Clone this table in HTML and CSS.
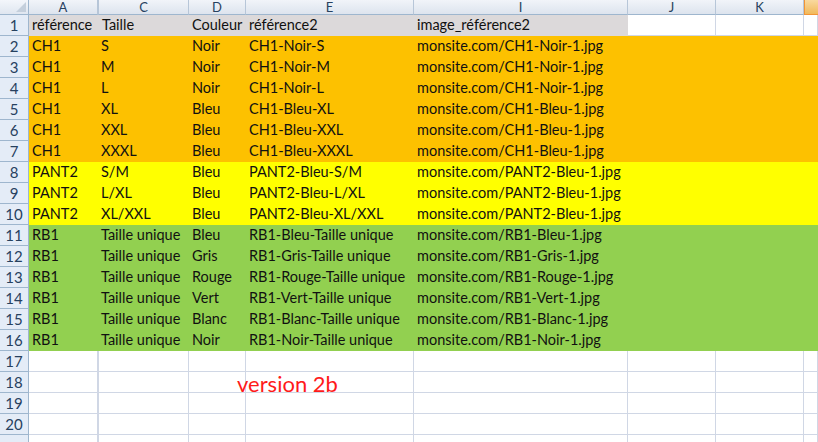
FILE: index.html
```html
<!DOCTYPE html>
<html lang="fr">
<head>
    <meta charset="UTF-8">
    <title>Classeur</title>
    <link rel="stylesheet" href="styles.css">
</head>
<body>
    <div class="sheet">
        <!-- Column headers -->
        <div class="row head">
            <div class="corner"><span class="tri"></span></div>
            <div class="col">A</div>
            <div class="col wide-left">C</div>
            <div class="col">D</div>
            <div class="col">E</div>
            <div class="col">I</div>
            <div class="col">J</div>
            <div class="col">K</div>
            <div class="col active"></div>
        </div>

        <div class="row">
            <div class="num">1</div>
            <div class="cell gray">référence</div>
            <div class="cell gray wide-left">Taille</div>
            <div class="cell gray">Couleur</div>
            <div class="cell gray">référence2</div>
            <div class="cell gray">image_référence2</div>
            <div class="cell"></div>
            <div class="cell"></div>
            <div class="cell"></div>
        </div>

        <div class="row orange">
            <div class="num">2</div>
            <div class="cell">CH1</div><div class="cell">S</div><div class="cell">Noir</div>
            <div class="cell">CH1-Noir-S</div><div class="cell">monsite.com/CH1-Noir-1.jpg</div>
            <div class="cell"></div><div class="cell"></div><div class="cell"></div>
        </div>
        <div class="row orange">
            <div class="num">3</div>
            <div class="cell">CH1</div><div class="cell">M</div><div class="cell">Noir</div>
            <div class="cell">CH1-Noir-M</div><div class="cell">monsite.com/CH1-Noir-1.jpg</div>
            <div class="cell"></div><div class="cell"></div><div class="cell"></div>
        </div>
        <div class="row orange">
            <div class="num">4</div>
            <div class="cell">CH1</div><div class="cell">L</div><div class="cell">Noir</div>
            <div class="cell">CH1-Noir-L</div><div class="cell">monsite.com/CH1-Noir-1.jpg</div>
            <div class="cell"></div><div class="cell"></div><div class="cell"></div>
        </div>
        <div class="row orange">
            <div class="num">5</div>
            <div class="cell">CH1</div><div class="cell">XL</div><div class="cell">Bleu</div>
            <div class="cell">CH1-Bleu-XL</div><div class="cell">monsite.com/CH1-Bleu-1.jpg</div>
            <div class="cell"></div><div class="cell"></div><div class="cell"></div>
        </div>
        <div class="row orange">
            <div class="num">6</div>
            <div class="cell">CH1</div><div class="cell">XXL</div><div class="cell">Bleu</div>
            <div class="cell">CH1-Bleu-XXL</div><div class="cell">monsite.com/CH1-Bleu-1.jpg</div>
            <div class="cell"></div><div class="cell"></div><div class="cell"></div>
        </div>
        <div class="row orange">
            <div class="num">7</div>
            <div class="cell">CH1</div><div class="cell">XXXL</div><div class="cell">Bleu</div>
            <div class="cell">CH1-Bleu-XXXL</div><div class="cell">monsite.com/CH1-Bleu-1.jpg</div>
            <div class="cell"></div><div class="cell"></div><div class="cell"></div>
        </div>

        <div class="row yellow">
            <div class="num">8</div>
            <div class="cell">PANT2</div><div class="cell">S/M</div><div class="cell">Bleu</div>
            <div class="cell">PANT2-Bleu-S/M</div><div class="cell">monsite.com/PANT2-Bleu-1.jpg</div>
            <div class="cell"></div><div class="cell"></div><div class="cell"></div>
        </div>
        <div class="row yellow">
            <div class="num">9</div>
            <div class="cell">PANT2</div><div class="cell">L/XL</div><div class="cell">Bleu</div>
            <div class="cell">PANT2-Bleu-L/XL</div><div class="cell">monsite.com/PANT2-Bleu-1.jpg</div>
            <div class="cell"></div><div class="cell"></div><div class="cell"></div>
        </div>
        <div class="row yellow">
            <div class="num">10</div>
            <div class="cell">PANT2</div><div class="cell">XL/XXL</div><div class="cell">Bleu</div>
            <div class="cell">PANT2-Bleu-XL/XXL</div><div class="cell">monsite.com/PANT2-Bleu-1.jpg</div>
            <div class="cell"></div><div class="cell"></div><div class="cell"></div>
        </div>

        <div class="row green">
            <div class="num">11</div>
            <div class="cell">RB1</div><div class="cell">Taille unique</div><div class="cell">Bleu</div>
            <div class="cell">RB1-Bleu-Taille unique</div><div class="cell">monsite.com/RB1-Bleu-1.jpg</div>
            <div class="cell"></div><div class="cell"></div><div class="cell"></div>
        </div>
        <div class="row green">
            <div class="num">12</div>
            <div class="cell">RB1</div><div class="cell">Taille unique</div><div class="cell">Gris</div>
            <div class="cell">RB1-Gris-Taille unique</div><div class="cell">monsite.com/RB1-Gris-1.jpg</div>
            <div class="cell"></div><div class="cell"></div><div class="cell"></div>
        </div>
        <div class="row green">
            <div class="num">13</div>
            <div class="cell">RB1</div><div class="cell">Taille unique</div><div class="cell">Rouge</div>
            <div class="cell">RB1-Rouge-Taille unique</div><div class="cell">monsite.com/RB1-Rouge-1.jpg</div>
            <div class="cell"></div><div class="cell"></div><div class="cell"></div>
        </div>
        <div class="row green">
            <div class="num">14</div>
            <div class="cell">RB1</div><div class="cell">Taille unique</div><div class="cell">Vert</div>
            <div class="cell">RB1-Vert-Taille unique</div><div class="cell">monsite.com/RB1-Vert-1.jpg</div>
            <div class="cell"></div><div class="cell"></div><div class="cell"></div>
        </div>
        <div class="row green">
            <div class="num">15</div>
            <div class="cell">RB1</div><div class="cell">Taille unique</div><div class="cell">Blanc</div>
            <div class="cell">RB1-Blanc-Taille unique</div><div class="cell">monsite.com/RB1-Blanc-1.jpg</div>
            <div class="cell"></div><div class="cell"></div><div class="cell"></div>
        </div>
        <div class="row green">
            <div class="num">16</div>
            <div class="cell">RB1</div><div class="cell">Taille unique</div><div class="cell">Noir</div>
            <div class="cell">RB1-Noir-Taille unique</div><div class="cell">monsite.com/RB1-Noir-1.jpg</div>
            <div class="cell"></div><div class="cell"></div><div class="cell"></div>
        </div>

        <div class="row">
            <div class="num">17</div>
            <div class="cell"></div><div class="cell wide-left"></div><div class="cell"></div><div class="cell"></div>
            <div class="cell"></div><div class="cell"></div><div class="cell"></div><div class="cell"></div>
        </div>
        <div class="row">
            <div class="num">18</div>
            <div class="cell"></div><div class="cell wide-left"></div><div class="cell"></div><div class="cell"></div>
            <div class="cell"></div><div class="cell"></div><div class="cell"></div><div class="cell"></div>
        </div>
        <div class="row">
            <div class="num">19</div>
            <div class="cell"></div><div class="cell wide-left"></div><div class="cell"></div><div class="cell"></div>
            <div class="cell"></div><div class="cell"></div><div class="cell"></div><div class="cell"></div>
        </div>
        <div class="row">
            <div class="num">20</div>
            <div class="cell"></div><div class="cell wide-left"></div><div class="cell"></div><div class="cell"></div>
            <div class="cell"></div><div class="cell"></div><div class="cell"></div><div class="cell"></div>
        </div>
        <div class="row">
            <div class="num"></div>
            <div class="cell"></div><div class="cell wide-left"></div><div class="cell"></div><div class="cell"></div>
            <div class="cell"></div><div class="cell"></div><div class="cell"></div><div class="cell"></div>
        </div>

        <!-- Floating text box -->
        <div class="textbox">version 2b</div>
    </div>
</body>
</html>
```

FILE: styles.css
```css
/* Global */
body {
    margin: 0;
    background-color: #ffffff;
    font-family: 'Lato', 'Liberation Sans', sans-serif;
    font-size: 14.5px;
    color: #111;
    overflow: hidden;
}

.sheet {
    position: relative;
    width: 818px;
}

/* Rows share one column template */
.row {
    display: grid;
    grid-template-columns: 29px 69px 91px 57px 168px 214px 88px 88px 1fr;
    height: 21px;
}

.row.head {
    height: 15px;
}

/* Column headers */
.corner {
    position: relative;
    background: linear-gradient(#f3f6fb, #dfe6f0);
    border-right: 1px solid #9eb6ce;
    border-bottom: 1px solid #9eb6ce;
}

.corner .tri {
    position: absolute;
    right: 2px;
    bottom: 2px;
    width: 0;
    height: 0;
    border-left: 10px solid transparent;
    border-bottom: 10px solid #c4cfdc;
}

.col {
    background: linear-gradient(#f1f4f9, #dde4ee);
    border-right: 1px solid #b7c6d8;
    border-bottom: 1px solid #9eb6ce;
    color: #27415f;
    font-size: 13px;
    line-height: 14px;
    text-align: center;
}

.col.active {
    background: linear-gradient(#f9d99f, #f1b95c);
    border-left: 1px solid #f29536;
    border-bottom: 1px solid #f29536;
    border-right: none;
}

/* Row numbers */
.num {
    background-color: #e4ecf7;
    border-right: 1px solid #9eb6ce;
    border-bottom: 1px solid #9eb6ce;
    color: #27415f;
    font-size: 15px;
    line-height: 20px;
    text-align: center;
}

/* Cells */
.cell {
    box-sizing: border-box;
    padding-left: 3px;
    line-height: 20px;
    white-space: nowrap;
    overflow: visible;
    border-right: 1px solid #d0d7e5;
    border-bottom: 1px solid #d0d7e5;
}

.wide-left {
    border-left: 1px solid #d0d7e5;
}

.cell.gray {
    background-color: #dcd9da;
    border-color: #dcd9da;
}

.col.wide-left {
    border-left: 1px solid #b7c6d8;
}

/* Coloured bands */
.orange { background-color: #fdc100; }
.yellow { background-color: #ffff00; }
.green  { background-color: #92d050; }

.orange .cell,
.yellow .cell,
.green .cell {
    border-color: transparent;
}

.orange .num,
.yellow .num,
.green .num {
    background-color: #e4ecf7;
}

/* Text box floating over the grid */
.textbox {
    position: absolute;
    left: 237px;
    top: 370px;
    color: #ff1a1a;
    font-size: 22px;
}
```
